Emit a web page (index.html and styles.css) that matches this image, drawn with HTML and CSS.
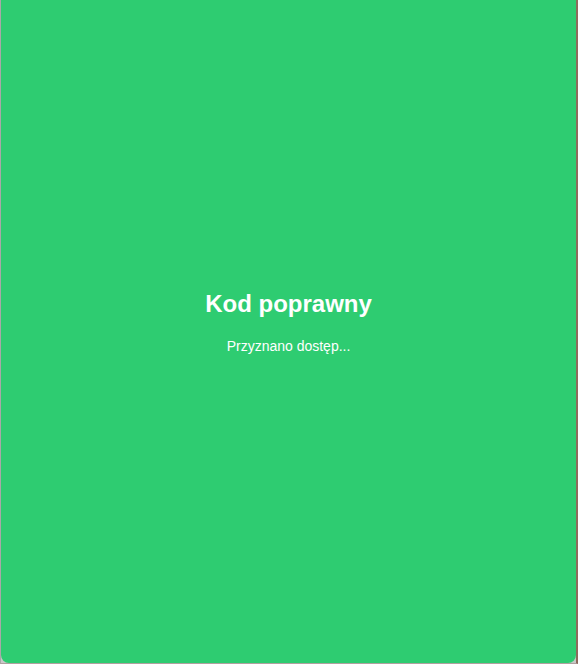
FILE: index.html
```html
<!DOCTYPE html>
<html lang="pl">
<head>
<meta charset="utf-8">
<title>Kod poprawny</title>
<link rel="stylesheet" href="styles.css">
</head>
<body>
<div class="frame">
  <div class="panel">
    <h2 class="title">Kod poprawny</h2>
    <p class="subtitle">Przyznano dostęp...</p>
  </div>
</div>
</body>
</html>
```

FILE: styles.css
```css
html, body {
  margin: 0;
  padding: 0;
  height: 100%;
  background: #ffffff;
}
.frame {
  display: flex;
  height: 664px;
  width: 578px;
  box-sizing: border-box;
  border-left: 1px solid #a8a8a8;
  border-right: 2px solid #8e6a5c;
  border-bottom: 1px solid #b0a0a0;
  background: #c8c8c8;
}
.panel {
  flex: 1;
  background: #2ecc71;
  border-radius: 0 0 8px 8px;
  display: flex;
  flex-direction: column;
  align-items: center;
  justify-content: center;
  color: #ffffff;
  font-family: "Liberation Sans", Arial, sans-serif;
  padding-bottom: 20px;
}
.title {
  margin: 0;
  font-size: 24px;
  font-weight: bold;
}
.subtitle {
  margin: 20px 0 0;
  font-size: 14px;
}
```
